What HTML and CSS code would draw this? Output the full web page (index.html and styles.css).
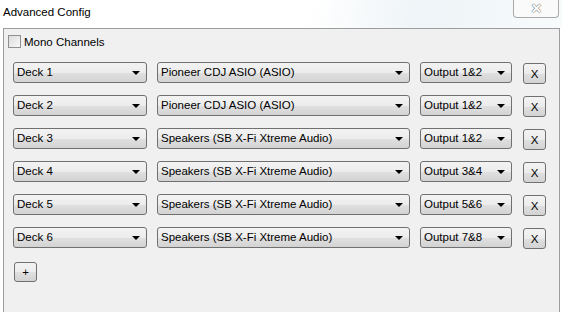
FILE: index.html
```html
<!DOCTYPE html>
<html lang="en">
<head>
<meta charset="UTF-8">
<title>Advanced Config</title>
<link rel="stylesheet" href="styles.css">
</head>
<body>
<div class="titlebar">
  <span class="title">Advanced Config</span>
  <button class="close-btn">&#x2715;</button>
</div>
<div class="frame">
  <label class="mono">
    <span class="checkbox"></span>
    Mono Channels
  </label>
  <div class="rows">
    <div class="row">
      <div class="combo deck">Deck 1<span class="arrow"></span></div>
      <div class="combo device">Pioneer CDJ ASIO (ASIO)<span class="arrow"></span></div>
      <div class="combo output">Output 1&amp;2<span class="arrow"></span></div>
      <button class="btn remove">X</button>
    </div>
    <div class="row">
      <div class="combo deck">Deck 2<span class="arrow"></span></div>
      <div class="combo device">Pioneer CDJ ASIO (ASIO)<span class="arrow"></span></div>
      <div class="combo output">Output 1&amp;2<span class="arrow"></span></div>
      <button class="btn remove">X</button>
    </div>
    <div class="row">
      <div class="combo deck">Deck 3<span class="arrow"></span></div>
      <div class="combo device">Speakers (SB X-Fi Xtreme Audio)<span class="arrow"></span></div>
      <div class="combo output">Output 1&amp;2<span class="arrow"></span></div>
      <button class="btn remove">X</button>
    </div>
    <div class="row">
      <div class="combo deck">Deck 4<span class="arrow"></span></div>
      <div class="combo device">Speakers (SB X-Fi Xtreme Audio)<span class="arrow"></span></div>
      <div class="combo output">Output 3&amp;4<span class="arrow"></span></div>
      <button class="btn remove">X</button>
    </div>
    <div class="row">
      <div class="combo deck">Deck 5<span class="arrow"></span></div>
      <div class="combo device">Speakers (SB X-Fi Xtreme Audio)<span class="arrow"></span></div>
      <div class="combo output">Output 5&amp;6<span class="arrow"></span></div>
      <button class="btn remove">X</button>
    </div>
    <div class="row">
      <div class="combo deck">Deck 6<span class="arrow"></span></div>
      <div class="combo device">Speakers (SB X-Fi Xtreme Audio)<span class="arrow"></span></div>
      <div class="combo output">Output 7&amp;8<span class="arrow"></span></div>
      <button class="btn remove">X</button>
    </div>
  </div>
  <button class="btn add">+</button>
</div>
</body>
</html>
```

FILE: styles.css
```css
body {
  margin: 0;
  padding: 0;
  width: 562px;
  height: 312px;
  overflow: hidden;
  background-color: #fff;
  font-family: "Liberation Sans", Arial, sans-serif;
  font-size: 11.5px;
  color: #000;
}
.titlebar {
  height: 28px;
  display: flex;
  justify-content: space-between;
  align-items: flex-start;
  background: linear-gradient(100deg, #ffffff 0%, #ffffff 55%, #eef4f7 75%, #f8fbfc 100%);
}
.title {
  padding: 6px 0 0 3px;
  font-size: 11.5px;
}
.close-btn {
  width: 46px;
  height: 18px;
  margin-right: 3px;
  padding: 0;
  border: 1px solid #a9a9a9;
  border-top: none;
  border-radius: 0 0 4px 4px;
  background: #fafafa;
  color: #fff;
  font-size: 13px;
  font-weight: bold;
  line-height: 16px;
  text-shadow: 0 0 1px #555, 0 0 1px #555;
}
.frame {
  box-sizing: border-box;
  margin-left: 3px;
  margin-right: 2px;
  height: 284px;
  padding: 6px 0 0 4px;
  border: 1px solid #9c9c9c;
  border-bottom: none;
  background-color: #f0f0f0;
}
.mono {
  display: flex;
  align-items: center;
  gap: 3px;
  height: 13px;
}
.checkbox {
  width: 11px;
  height: 11px;
  border: 1px solid #8e8f8f;
  background: linear-gradient(135deg, #dcdcdc, #f8f8f8);
}
.rows {
  display: flex;
  flex-direction: column;
  gap: 12px;
  margin: 14px 0 0 5px;
}
.row {
  display: flex;
  align-items: flex-start;
  height: 21px;
}
.combo {
  position: relative;
  box-sizing: border-box;
  height: 21px;
  padding: 0 0 0 3px;
  line-height: 19px;
  border: 1px solid #707070;
  border-radius: 3px;
  background: linear-gradient(#f3f3f3 0%, #ececec 50%, #e0e0e0 51%, #d3d3d3 100%);
  white-space: nowrap;
}
.arrow {
  position: absolute;
  right: 6px;
  top: 8px;
  border-left: 4px solid transparent;
  border-right: 4px solid transparent;
  border-top: 4px solid #000;
}
.deck {
  width: 134px;
}
.device {
  width: 253px;
  margin-left: 10px;
}
.output {
  width: 92px;
  margin-left: 10px;
}
.btn {
  box-sizing: border-box;
  width: 23px;
  height: 21px;
  padding: 0;
  border: 1px solid #707070;
  border-radius: 3px;
  background: linear-gradient(#f3f3f3 0%, #ececec 50%, #e0e0e0 51%, #d3d3d3 100%);
  font-family: "Liberation Sans", Arial, sans-serif;
  font-size: 11.5px;
  color: #000;
}
.remove {
  margin: 1px 0 0 11px;
}
.add {
  display: block;
  margin: 14px 0 0 6px;
  height: 20px;
}
```
